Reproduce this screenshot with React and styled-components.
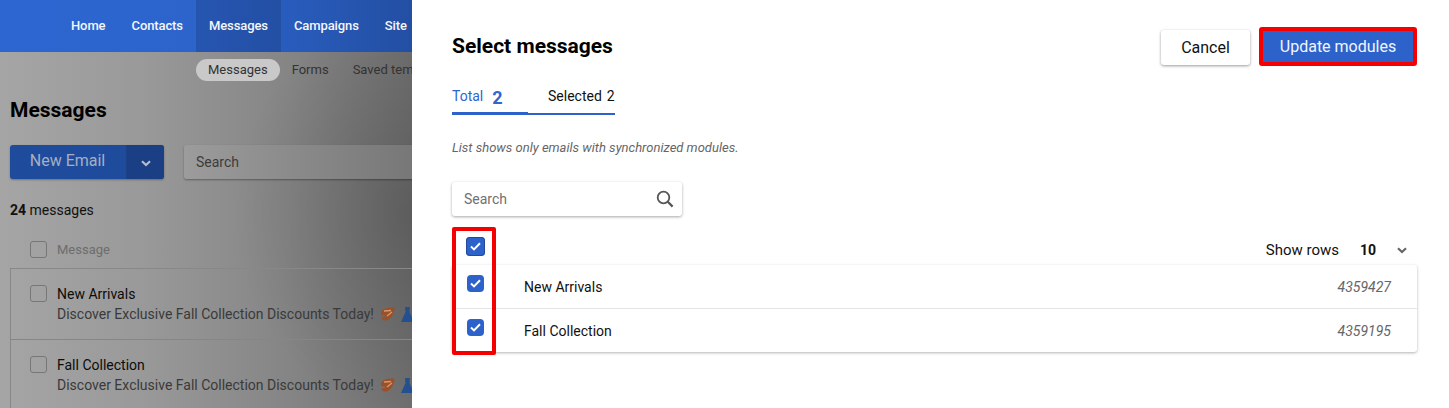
import React from "react";
import styled, { createGlobalStyle } from "styled-components";

const GlobalStyle = createGlobalStyle`
  html, body {
    margin: 0;
    padding: 0;
    background: #fff;
    font-family: Roboto, "Liberation Sans", sans-serif;
  }
`;

const Check = () => (
  <svg width="11" height="9" viewBox="0 0 11 9" fill="none">
    <path d="M1 4.6 L4 7.4 L10 1.2" stroke="#fff" strokeWidth="2" />
  </svg>
);

const Chevron = ({ color }) => (
  <svg width="10" height="7" viewBox="0 0 10 7" fill="none">
    <path d="M1 1.2 L5 5 L9 1.2" stroke={color} strokeWidth="2.2" />
  </svg>
);

const Leaf = () => (
  <EmojiIcon width="15" height="14" viewBox="0 0 15 14">
    <path d="M1 5 C3 1 9 0 14.5 0.5 C14.5 6 11 13.5 5 13.5 C3.5 13.5 2 12.5 1 11 L7 9 L1 8 Z" fill="#9c5028" />
    <path d="M4 4 L11 3.5 M7 9 L12 5" stroke="#d39a72" strokeWidth="1.3" />
  </EmojiIcon>
);

const Dress = () => (
  <EmojiIcon width="13" height="15" viewBox="0 0 13 15">
    <path d="M4 0 H9 L8.5 5 L13 15 H0 L4.5 5 Z" fill="#25508f" />
  </EmojiIcon>
);

const messages = [
  { name: "New Arrivals", id: "4359427" },
  { name: "Fall Collection", id: "4359195" },
];

const App = () => {
  return (
    <Page>
      <GlobalStyle />
      <Backdrop>
        <TopBar>
          <NavItem>Home</NavItem>
          <NavItem>Contacts</NavItem>
          <NavItem $active>Messages</NavItem>
          <NavItem>Campaigns</NavItem>
          <NavItem>Site</NavItem>
        </TopBar>
        <Content>
          <SubNav>
            <SubItem $active>Messages</SubItem>
            <SubItem>Forms</SubItem>
            <SubItem>Saved templates</SubItem>
          </SubNav>
          <PageTitle>Messages</PageTitle>
          <Actions>
            <SplitButton>
              <SplitLabel>New Email</SplitLabel>
              <SplitArrow>
                <Chevron color="#b4bdcb" />
              </SplitArrow>
            </SplitButton>
            <BackSearch>Search</BackSearch>
          </Actions>
          <Count>
            <b>24</b> messages
          </Count>
          <ColumnHead>
            <GhostBox />
            <span>Message</span>
          </ColumnHead>
          <BackList>
            {messages.map((m) => (
              <BackRow key={m.id}>
                <GhostBox />
                <div>
                  <BackName>{m.name}</BackName>
                  <BackSubject>
                    Discover Exclusive Fall Collection Discounts Today!
                    <Leaf />
                    <Dress />
                  </BackSubject>
                </div>
              </BackRow>
            ))}
          </BackList>
        </Content>
      </Backdrop>

      <Drawer>
        <DrawerHead>
          <DrawerTitle>Select messages</DrawerTitle>
          <HeadButtons>
            <CancelButton>Cancel</CancelButton>
            <UpdateButton>Update modules</UpdateButton>
          </HeadButtons>
        </DrawerHead>
        <Tabs>
          <Tab $active>
            Total <TabCount>2</TabCount>
          </Tab>
          <Tab>
            Selected <span>2</span>
          </Tab>
        </Tabs>
        <Note>List shows only emails with synchronized modules.</Note>
        <SearchBox>
          <span>Search</span>
          <svg width="18" height="18" viewBox="0 0 18 18" fill="none">
            <circle cx="7.5" cy="7.5" r="5.8" stroke="#555" strokeWidth="1.8" />
            <path d="M11.8 11.8 L16.6 16.6" stroke="#555" strokeWidth="2.2" />
          </svg>
        </SearchBox>
        <ListArea>
          <Highlight />
          <ListTools>
            <CheckBox $focus>
              <Check />
            </CheckBox>
            <ShowRows>
              Show rows
              <b>10</b>
              <Chevron color="#666" />
            </ShowRows>
          </ListTools>
          <Card>
            {messages.map((m) => (
              <Row key={m.id}>
                <CheckBox>
                  <Check />
                </CheckBox>
                <RowName>{m.name}</RowName>
                <RowId>{m.id}</RowId>
              </Row>
            ))}
          </Card>
        </ListArea>
      </Drawer>
    </Page>
  );
};

export default App;

const Page = styled.div`
  width: 1449px;
  height: 408px;
  display: flex;
  overflow: hidden;
  background: #fff;
`;

const Backdrop = styled.div`
  width: 412px;
  flex-shrink: 0;
  overflow: hidden;
  display: flex;
  flex-direction: column;
`;

const TopBar = styled.div`
  height: 52px;
  flex-shrink: 0;
  display: flex;
  padding-left: 58px;
  background: linear-gradient(90deg, #2d66d0 0%, #2c64cc 50%, #234fa3 100%);
`;

const NavItem = styled.div`
  padding: 0 13px;
  display: flex;
  align-items: center;
  padding-bottom: 1px;
  font-size: 13px;
  font-weight: 500;
  letter-spacing: -0.1px;
  white-space: nowrap;
  color: #f4f6fb;
  background: ${(p) => (p.$active ? "rgba(20, 40, 90, 0.25)" : "transparent")};
`;

const Content = styled.div`
  flex: 1;
  padding: 7px 0 0 10px;
  background:
    radial-gradient(ellipse 180px 200px at 100% 45%, rgba(0, 0, 0, 0.16), rgba(0, 0, 0, 0)),
    linear-gradient(90deg, #a5a5a5 0%, #999 35%, #858585 70%, #6e6e6e 100%);
`;

const SubNav = styled.div`
  display: flex;
  margin-left: 186px;
  height: 22px;
  white-space: nowrap;
`;

const SubItem = styled.div`
  padding: 0 12px;
  border-radius: 11px;
  line-height: 22px;
  font-size: 13px;
  color: #333;
  background: ${(p) => (p.$active ? "#c9c9c9" : "transparent")};
`;

const PageTitle = styled.div`
  margin-top: 17px;
  font-size: 21px;
  line-height: 24px;
  font-weight: 700;
  color: #000;
`;

const Actions = styled.div`
  display: flex;
  margin-top: 23px;
  gap: 20px;
`;

const SplitButton = styled.div`
  width: 154px;
  height: 34px;
  flex-shrink: 0;
  display: flex;
  border-radius: 3px;
  overflow: hidden;
  background: #1f4b9c;
  box-shadow: 0 1px 2px rgba(0, 0, 0, 0.3);
`;

const SplitLabel = styled.div`
  width: 115px;
  padding-right: 1px;
  text-align: center;
  line-height: 31px;
  font-size: 16px;
  color: #a5afc2;
`;

const SplitArrow = styled.div`
  flex: 1;
  display: flex;
  align-items: center;
  justify-content: center;
  padding-top: 2px;
  border-left: 1px solid #1c4186;
  background: #1b3f84;
`;

const BackSearch = styled.div`
  flex: 1;
  min-width: 300px;
  height: 34px;
  padding-left: 12px;
  line-height: 34px;
  font-size: 14px;
  color: #3c3c3c;
  border-radius: 3px;
  background: linear-gradient(90deg, #9c9c9c 0%, #6a6a6a 100%);
  box-shadow: 0 1px 2px rgba(0, 0, 0, 0.35);
`;

const Count = styled.div`
  margin-top: 22px;
  font-size: 14px;
  line-height: 18px;
  color: #111;
`;

const ColumnHead = styled.div`
  display: flex;
  align-items: center;
  gap: 10px;
  margin-top: 22px;
  margin-left: 20px;
  font-size: 13px;
  color: #6d6d6d;
`;

const GhostBox = styled.div`
  width: 15px;
  height: 15px;
  flex-shrink: 0;
  border: 1px solid #777;
  border-radius: 3px;
`;

const BackList = styled.div`
  margin-top: 10px;
  width: 600px;
  border-top: 1px solid #888;
  border-left: 1px solid #888;
`;

const BackRow = styled.div`
  height: 71px;
  display: flex;
  gap: 10px;
  padding: 16px 0 0 19px;
  box-sizing: border-box;
  border-bottom: 1px solid #868686;
`;

const BackName = styled.div`
  font-size: 14px;
  line-height: 18px;
  color: #0c0c0c;
`;

const BackSubject = styled.div`
  display: flex;
  align-items: center;
  gap: 6px;
  margin-top: 2px;
  font-size: 14px;
  line-height: 18px;
  white-space: nowrap;
  color: #3a3a3a;
`;

const EmojiIcon = styled.svg`
  flex: none;
`;

const Drawer = styled.div`
  flex: 1;
  padding: 0 32px 0 40px;
  background: #fff;
`;

const DrawerHead = styled.div`
  display: flex;
  justify-content: space-between;
  padding-top: 27px;
`;

const DrawerTitle = styled.div`
  margin-top: 3px;
  font-size: 21px;
  line-height: 32px;
  font-weight: 700;
  color: #000;
`;

const HeadButtons = styled.div`
  display: flex;
  align-items: center;
  gap: 9px;
`;

const CancelButton = styled.div`
  width: 89px;
  height: 35px;
  margin-top: 1px;
  display: flex;
  align-items: center;
  justify-content: center;
  font-size: 16px;
  color: #111;
  border-radius: 3px;
  background: #fff;
  box-shadow: 0 1px 3px rgba(0, 0, 0, 0.4);
`;

const UpdateButton = styled.div`
  width: 150px;
  height: 31px;
  display: flex;
  align-items: center;
  justify-content: center;
  font-size: 16px;
  color: #f2f5fc;
  background: #2d62cb;
  border: 4px solid #f50000;
  border-radius: 3px;
`;

const Tabs = styled.div`
  display: flex;
  margin-top: 18px;
  width: fit-content;
`;

const Tab = styled.div`
  box-sizing: border-box;
  height: 31px;
  width: ${(p) => (p.$active ? "76px" : "87px")};
  padding-left: ${(p) => (p.$active ? "0" : "20px")};
  display: flex;
  gap: ${(p) => (p.$active ? "9px" : "5px")};
  align-items: flex-start;
  padding-top: 2px;
  font-size: 14px;
  line-height: 20px;
  white-space: nowrap;
  color: ${(p) => (p.$active ? "#2d66d0" : "#111")};
  border-bottom: ${(p) => (p.$active ? "3px" : "2px")} solid #2d62cb;
`;

const TabCount = styled.span`
  font-size: 18px;
  line-height: 21px;
  margin-top: 1px;
  font-weight: 700;
`;

const Note = styled.div`
  margin-top: 25px;
  font-size: 13px;
  line-height: 16px;
  font-style: italic;
  color: #666;
`;

const SearchBox = styled.div`
  box-sizing: border-box;
  width: 230px;
  height: 34px;
  margin-top: 26px;
  padding: 0 8px 0 12px;
  display: flex;
  align-items: center;
  justify-content: space-between;
  font-size: 14px;
  color: #707070;
  border-radius: 3px;
  box-shadow: 0 1px 3px rgba(0, 0, 0, 0.35);
`;

const ListArea = styled.div`
  position: relative;
  margin-top: 11px;
`;

const Highlight = styled.div`
  position: absolute;
  left: 0;
  top: 0;
  width: 36px;
  height: 120px;
  border: 4px solid #f50000;
  border-radius: 2px;
  z-index: 2;
`;

const ListTools = styled.div`
  height: 38px;
  display: flex;
  justify-content: space-between;
  align-items: flex-start;
  padding: 10px 10px 0 14px;
  box-sizing: border-box;
`;

const CheckBox = styled.div`
  width: ${(p) => (p.$focus ? "19px" : "17px")};
  height: ${(p) => (p.$focus ? "19px" : "17px")};
  flex-shrink: 0;
  margin-left: ${(p) => (p.$focus ? "0" : "1px")};
  display: flex;
  align-items: center;
  justify-content: center;
  border-radius: 4px;
  background: #2d62cb;
  box-shadow: ${(p) => (p.$focus ? "inset 0 0 0 1px #24499a" : "none")};
`;

const ShowRows = styled.div`
  display: flex;
  align-items: center;
  font-size: 15px;
  color: #111;
  margin-top: 4px;

  b {
    width: 37px;
    margin-left: 21px;
    font-size: 14px;
  }
`;

const Card = styled.div`
  border-radius: 3px;
  box-shadow: 0 1px 3px rgba(0, 0, 0, 0.3);
`;

const Row = styled.div`
  height: 44px;
  box-sizing: border-box;
  display: flex;
  padding: 10px 26px 0 14px;
  font-size: 14px;
  color: #111;

  &:not(:last-child) {
    border-bottom: 1px solid #e4e4e4;
  }

  &:last-child {
    height: 43px;
  }
`;

const RowName = styled.div`
  flex: 1;
  margin-left: 40px;
  padding-top: 4px;
`;

const RowId = styled.div`
  padding-top: 4px;
  font-size: 14px;
  font-style: italic;
  color: #666;
`;
